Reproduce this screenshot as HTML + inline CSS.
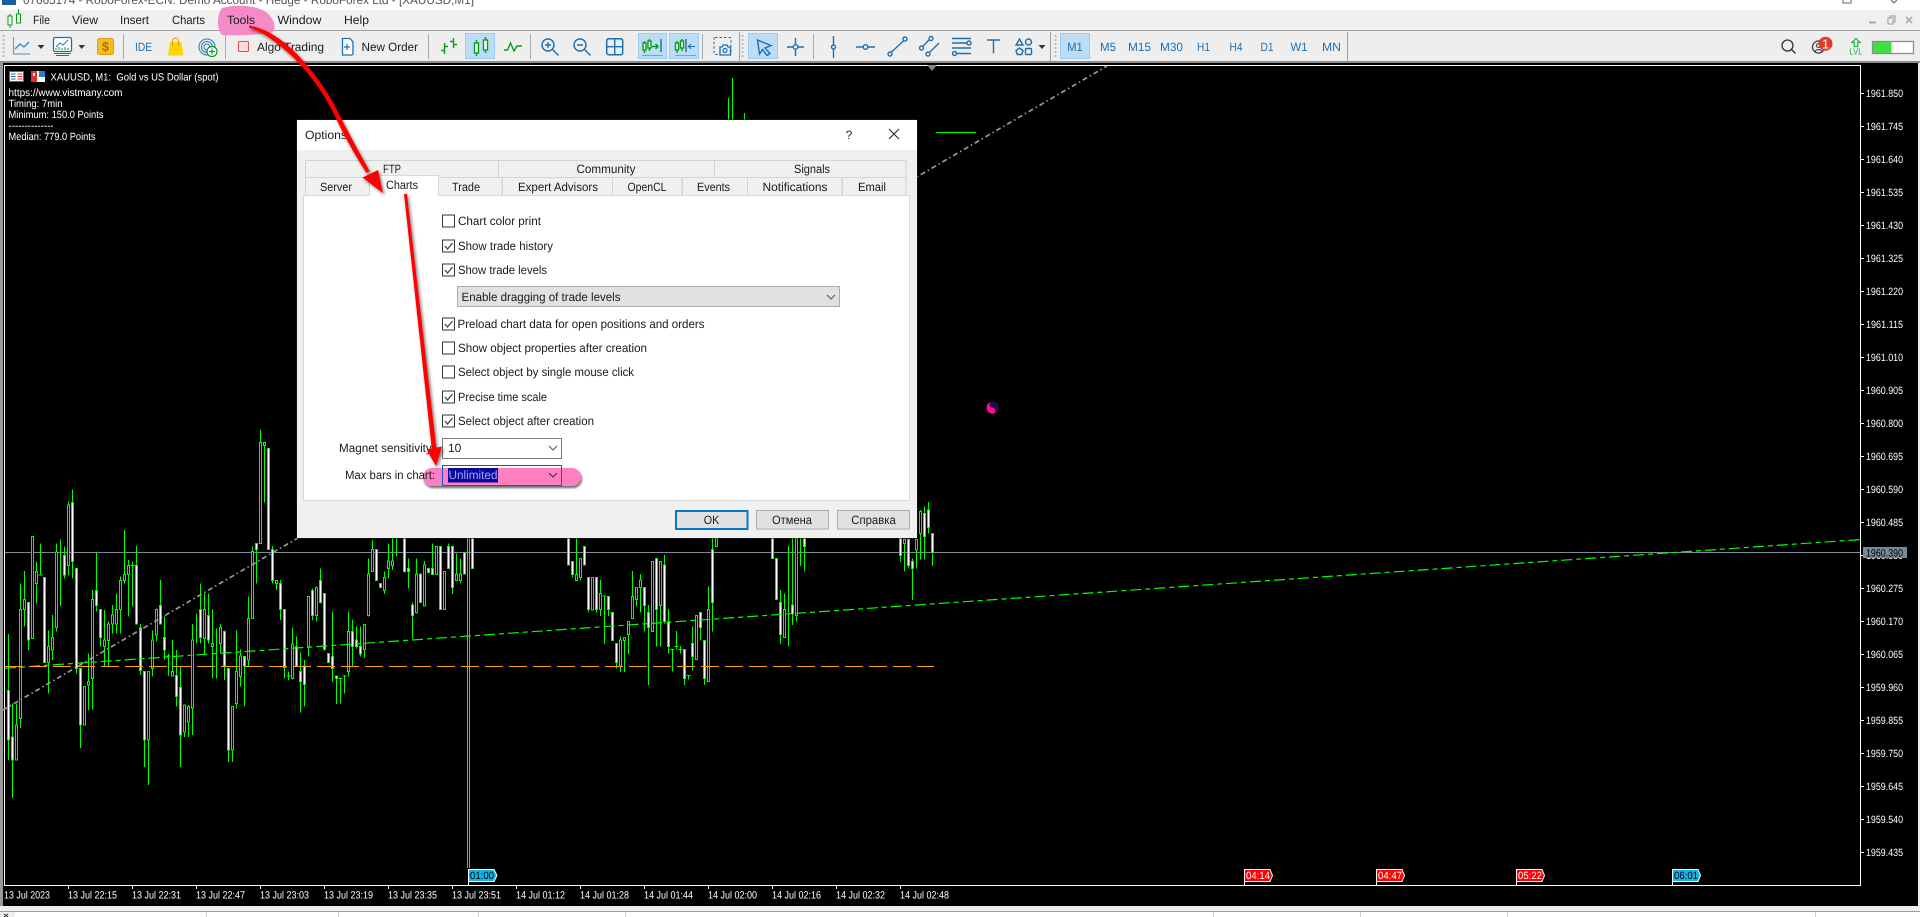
<!DOCTYPE html>
<html lang="en"><head><meta charset="utf-8"><title>MetaTrader chart options</title>
<style>
html,body{margin:0;padding:0;background:#000;width:1920px;height:917px;overflow:hidden}
svg{display:block;font-family:"Liberation Sans",sans-serif}
.u{font-size:12px;fill:#1a1a1a}
.b{font-size:12px;fill:#1f6fae}
.c{font-size:10.5px;fill:#fff}
.s{fill:none;stroke:#1f6fae;stroke-width:1.4}
.g{fill:none;stroke:#0a9a1e;stroke-width:1.4}
.sep{stroke:#a8a8a8;stroke-width:1}
</style></head><body>
<svg xmlns="http://www.w3.org/2000/svg" width="1920" height="917" viewBox="0 0 1920 917" text-rendering="geometricPrecision">
<defs>
<filter id="sh" x="-30%" y="-30%" width="160%" height="160%"><feDropShadow dx="1.5" dy="2" stdDeviation="1.5" flood-color="#000" flood-opacity=".55"/></filter>
<filter id="sp" x="-10%" y="-30%" width="120%" height="170%"><feDropShadow dx="1" dy="2" stdDeviation="1" flood-color="#000" flood-opacity=".6"/></filter>
</defs>

<!-- chrome backgrounds -->
<rect width="1920" height="917" fill="#000"/>
<rect width="1920" height="10" fill="#fff"/>
<rect y="10" width="1920" height="20" fill="#f0f0f0"/>
<rect y="30" width="1920" height="1" fill="#a0a0a0"/>
<rect y="31" width="1920" height="30" fill="#eeeeee"/>
<rect y="61" width="1920" height="2" fill="#8c8c8c"/>
<rect y="63" width="3" height="843" fill="#9a9a9a"/>
<rect x="1918" y="63" width="2" height="843" fill="#eee"/>

<!-- chart frame -->
<g shape-rendering="crispEdges">
<rect x="4" y="65" width="1857" height="1" fill="#fff"/>
<rect x="4" y="65" width="1" height="821" fill="#fff"/>
<rect x="1860" y="65" width="1" height="821" fill="#fff"/>
<rect x="4" y="885" width="1857" height="1" fill="#fff"/>
</g>
<polygon points="927,65 937,65 932,71" fill="#778899"/>

<!-- lines under candles -->
<line x1="5" y1="552.5" x2="1860" y2="552.5" stroke="#7f8c9c" stroke-width="1" shape-rendering="crispEdges"/>

<!-- candles, left block -->
<g transform="translate(.1667 420) scale(.33333)" stroke="#00ff00" stroke-width="3" shape-rendering="crispEdges">
<path fill="none" d="M25 642V1020M37 850V1134M49 850V1020M61 490V924M73 453V620M85 548V690M97 349V655M109 425V550M121 370V465M133 472V728M145 632V820M157 585V720M169 370V635M181 358V558M193 380V475M205 245V465M217 208V475M229 445V760M241 745V984M253 800V915M265 700V870M277 510V868M289 397V575M301 568V680M313 570V740M325 605V740M337 555V640M349 520V640M361 470V640M373 330V490M385 420V590M397 424V560M409 378V612M421 612V765M433 754V1041M445 754V1095M457 632V770M469 565V665M481 480V612M493 590V720M505 700V768M517 660V770M529 690V860M541 738V1041M553 855V951M565 855V951M577 612V945M589 580V670M601 490V670M613 520V700M625 520V670M637 568V775M649 625V775M661 612V700M673 632V780M685 745V1026M697 858V1026M709 632V865M721 688V800M733 710V860M745 530V738M757 380V596M769 370V490M781 28V372M793 68V248M805 85V388M817 378V490M829 480V510M841 480V600M853 568V775M865 755V780M877 622V778M889 650V738M901 698V878M913 720V860M925 530V710M937 505V600M949 500V605M961 445V550M973 520V692M985 700V727M997 575V785M1009 768V852M1021 775V850M1033 765V820M1045 575V770M1057 598V740M1069 620V685M1081 620V710M1093 613V712M1105 415V590M1117 360V455M1129 388V482M1141 490V502M1153 455V522M1165 370V475M1177 355V450M1189 354V408M1213 355V458M1225 415V505M1237 547V655M1249 415V580M1261 462V548M1273 423V560M1285 445V458M1297 370V465M1309 380V463M1321 380V568M1333 455V570M1345 370V445M1357 380V522M1369 400V482M1381 415V490M1393 398V462M1402 355V1344M1408 355V1344M1417 355V445M115 465H127M499 708H511M859 768H871M1015 775H1027M1027 768H1039M391 436H403"/>
<path fill="#000" d="M58 568h6V895h-6zM70 538h6V568h-6zM46 915h6V1020h-6zM94 349h6V655h-6zM106 455h6V490h-6zM142 680h6V728h-6zM154 652h6V690h-6zM166 396h6V622h-6zM202 255h6V437h-6zM250 800h6V915h-6zM262 785h6V795h-6zM274 538h6V775h-6zM310 660h6V680h-6zM322 612h6V662h-6zM334 585h6V612h-6zM346 568h6V612h-6zM358 481h6V568h-6zM370 463h6V482h-6zM382 436h6V464h-6zM442 754h6V960h-6zM454 660h6V745h-6zM466 568h6V645h-6zM514 755h6V768h-6zM550 855h6V936h-6zM562 860h6V906h-6zM574 660h6V864h-6zM610 568h6V655h-6zM634 670h6V680h-6zM658 622h6V670h-6zM694 860h6V990h-6zM706 755h6V850h-6zM718 708h6V770h-6zM742 595h6V720h-6zM754 395h6V595h-6zM778 68h6V370h-6zM790 68h6V76h-6zM826 482h6V490h-6zM874 672h6V775h-6zM922 530h6V683h-6zM946 502h6V587h-6zM1042 635h6V755h-6zM1090 613h6V688h-6zM1102 462h6V587h-6zM1114 388h6V455h-6zM1150 472h6V512h-6zM1162 423h6V445h-6zM1174 423h6V437h-6zM1246 462h6V578h-6zM1270 435h6V558h-6zM1306 380h6V463h-6zM1330 455h6V568h-6zM1366 462h6V482h-6zM1378 462h6V482h-6z"/>
<path fill="#fff" d="M22 812h6V960h-6zM34 951h6V1020h-6zM82 548h6V660h-6zM130 472h6V728h-6zM190 406h6V465h-6zM214 247h6V425h-6zM226 445h6V745h-6zM238 745h6V915h-6zM286 511h6V557h-6zM298 568h6V652h-6zM406 436h6V612h-6zM418 624h6V752h-6zM430 754h6V960h-6zM478 557h6V612h-6zM490 652h6V690h-6zM526 767h6V830h-6zM538 803h6V945h-6zM598 568h6V652h-6zM622 587h6V660h-6zM670 635h6V738h-6zM682 745h6V990h-6zM730 710h6V738h-6zM766 370h6V388h-6zM802 85h6V388h-6zM814 388h6V482h-6zM838 490h6V568h-6zM850 568h6V742h-6zM886 680h6V738h-6zM898 755h6V785h-6zM910 738h6V793h-6zM934 511h6V587h-6zM958 481h6V548h-6zM970 520h6V688h-6zM982 700h6V727h-6zM994 710h6V745h-6zM1006 768h6V775h-6zM1054 635h6V680h-6zM1066 660h6V680h-6zM1078 680h6V702h-6zM1126 388h6V482h-6zM1138 490h6V502h-6zM1210 355h6V455h-6zM1222 445h6V455h-6zM1234 555h6V587h-6zM1258 462h6V548h-6zM1282 445h6V458h-6zM1294 445h6V463h-6zM1318 380h6V568h-6zM1342 380h6V445h-6zM1354 380h6V502h-6zM1390 398h6V462h-6zM1414 355h6V445h-6z"/>
</g>

<!-- candles, right block -->
<g transform="translate(480.1667 520) scale(.33333)" stroke="#00ff00" stroke-width="3" shape-rendering="crispEdges">
<path fill="none" d="M265 55V135M277 125V173M289 55V183M301 115V182M313 80V135M325 172V278M337 172V270M349 172V278M361 180V288M373 228V372M385 230V288M397 278V362M409 370V446M421 350V456M433 352V456M445 305V402M457 153V296M469 202V258M481 162V278M493 202V335M505 255V495M517 124V334M529 115V380M541 124V380M553 105V310M565 267V400M577 388V455M589 333V388M601 378V400M613 388V495M625 465V478M637 320V452M649 287V418M661 277V362M673 362V495M685 200V484M697 55V335M709 55V80M877 55V115M889 115V238M901 210V372M913 220V352M925 78V380M937 55V315M949 55V305M961 55V138M973 55V155M1261 55V125M1273 58V155M1285 58V145M1297 115V240M1309 58V145M1321 -30V118M1333 -40V118M1345 -54V40M1357 40V138M367 228H379M571 388H583M583 380H595M595 388H607M619 466H631"/>
<path fill="#000" d="M286 163h6V182h-6zM298 115h6V172h-6zM334 172h6V270h-6zM358 220h6V268h-6zM418 360h6V438h-6zM430 352h6V362h-6zM442 305h6V344h-6zM454 230h6V296h-6zM466 202h6V238h-6zM478 180h6V203h-6zM514 124h6V334h-6zM538 124h6V256h-6zM646 287h6V418h-6zM682 268h6V484h-6zM706 55h6V80h-6zM910 268h6V352h-6zM946 55h6V287h-6zM1270 58h6V70h-6zM1306 58h6V90h-6zM1318 -25h6V40h-6z"/>
<path fill="#fff" d="M262 55h6V135h-6zM274 125h6V163h-6zM310 80h6V135h-6zM322 172h6V268h-6zM346 172h6V268h-6zM382 230h6V268h-6zM394 278h6V362h-6zM406 370h6V428h-6zM490 202h6V256h-6zM502 278h6V322h-6zM526 115h6V268h-6zM550 135h6V305h-6zM562 305h6V380h-6zM610 388h6V475h-6zM634 370h6V410h-6zM658 277h6V322h-6zM670 362h6V475h-6zM694 88h6V247h-6zM874 55h6V115h-6zM886 115h6V238h-6zM898 247h6V343h-6zM934 255h6V282h-6zM970 55h6V80h-6zM1258 55h6V106h-6zM1282 58h6V136h-6zM1294 124h6V146h-6zM1330 -20h6V50h-6zM1342 -30h6V22h-6zM1354 40h6V97h-6z"/>
</g>
<path d="M732.5 78V120M728.5 98V120M744.5 113V120" stroke="#00ff00" stroke-width="1" fill="none" shape-rendering="crispEdges"/>
<rect x="936" y="132" width="40" height="1" fill="#00ff00"/>

<!-- overlay lines -->
<line x1="3" y1="710" x2="1107" y2="66" stroke="#999" stroke-width="1.7" stroke-dasharray="5 3 1.5 3"/>
<line x1="5" y1="668.2" x2="1860" y2="539.6" stroke="#00ff00" stroke-width="1.2" stroke-dasharray="11 4 5 4"/>
<line x1="5" y1="666.5" x2="934" y2="666.5" stroke="#ffa500" stroke-width="1" stroke-dasharray="18 6" shape-rendering="crispEdges"/>
<circle cx="992.5" cy="407.7" r="6" fill="#ff0a8c"/>
<path d="M992.5 401.7a6 6 0 0 1 0 12a3 3 0 0 0 0-6a3 3 0 0 1 0-6z" fill="#1a0a50"/>

<!-- title bar -->
<rect x="2" y="0" width="14" height="5" fill="#1a5fa0"/>
<text x="23" y="4" font-size="12" fill="#555" textLength="451" lengthAdjust="spacingAndGlyphs">07665174 - RoboForex-ECN: Demo Account - Hedge - RoboForex Ltd - [XAUUSD,M1]</text>
<path d="M1843 0v3h8V0" fill="none" stroke="#666"/>
<path d="M1891 0l3 3 3-3" fill="none" stroke="#666"/>

<!-- Tools highlight -->
<path d="M222 8C235 4 255 5 266 12C276 20 277 32 270 33C255 35 232 36 222 35C216 28 217 15 222 8z" fill="#f48ac6"/>

<!-- menu -->
<g>
<path d="M10 16v14M18.500 11v14" stroke="#0a9a1e" stroke-width="1" fill="none" transform="translate(0 -2)"/>
<rect x="8" y="16" width="4" height="9" fill="#fff" stroke="#0a9a1e"/>
<rect x="16.500" y="14" width="4" height="9" fill="#fff" stroke="#0a9a1e"/>
<text class="u" x="33" y="24" textLength="17" lengthAdjust="spacingAndGlyphs">File</text>
<text class="u" x="72" y="24" textLength="26" lengthAdjust="spacingAndGlyphs">View</text>
<text class="u" x="120" y="24" textLength="29" lengthAdjust="spacingAndGlyphs">Insert</text>
<text class="u" x="172" y="24" textLength="33" lengthAdjust="spacingAndGlyphs">Charts</text>
<text class="u" x="227" y="24" textLength="28" lengthAdjust="spacingAndGlyphs">Tools</text>
<text class="u" x="277.500" y="24" textLength="44" lengthAdjust="spacingAndGlyphs">Window</text>
<text class="u" x="344" y="24" textLength="25" lengthAdjust="spacingAndGlyphs">Help</text>
<path d="M1869 22.500h7" stroke="#aaa" stroke-width="2"/>
<path d="M1888 18h5v6h-5zM1890 18v-2h5v6h-2" fill="none" stroke="#aaa" stroke-width="1.200"/>
<path d="M1906 17l6 6M1912 17l-6 6" stroke="#aaa" stroke-width="1.600"/>
</g>

<!-- toolbar separators -->
<g shape-rendering="crispEdges">
<path class="sep" d="M123.500 34V59M225.500 34V59M428.500 34V59M530.500 34V59M702.500 34V59M813.500 34V59"/>
<path d="M739.500 32V61M1050.500 32V61M1347.500 32V61" stroke="#a0a0a0" stroke-width="1"/>
<path d="M742.500 35V58M1055.500 35V58M3.500 35V58" stroke="#bbb" stroke-width="2" stroke-dasharray="2 2"/>
</g>

<!-- toolbar highlights -->
<g fill="#bddcf5" stroke="#9bcdf5" stroke-width="1" shape-rendering="crispEdges">
<rect x="465.500" y="33.500" width="29" height="25"/>
<rect x="638.500" y="33.500" width="28" height="25"/>
<rect x="669.500" y="33.500" width="29" height="25"/>
<rect x="748.500" y="33.500" width="29" height="25"/>
<rect x="1060.500" y="33.500" width="29" height="25"/>
</g>

<!-- toolbar icons -->
<path d="M13.500 37V54H30" fill="none" stroke="#7f9fc0" stroke-width="1.200"/>
<path d="M15 49l5-5 4 3 5-5" fill="none" stroke="#3d86c6" stroke-width="1.300"/>
<polygon points="37.500,45 44.500,45 41,49" fill="#333"/>
<rect x="53.500" y="37.500" width="18" height="14" rx="1.500" fill="#fff" stroke="#1f6fae" stroke-width="1.300"/>
<path d="M56 47l4-4 3 2 5-5" fill="none" stroke="#1f6fae"/>
<path d="M56 50v-2M59 50v-3M62 50v-2M65 50v-3M68 50v-2" stroke="#0a9a1e"/>
<path d="M54 53.500h17M56 55.500h13" stroke="#1f6fae"/>
<polygon points="78.500,45 85,45 81.700,49" fill="#333"/>
<rect x="97.500" y="38.500" width="16" height="16" rx="2" fill="#f6bb1e" stroke="#d79e12"/>
<text x="105.500" y="51" font-size="13" font-weight="bold" text-anchor="middle" fill="#a87400">$</text>
<text class="b" x="135" y="51" textLength="17" lengthAdjust="spacingAndGlyphs">IDE</text>
<polygon points="170,42 181.500,42 183.500,55.500 168,55.500" fill="#ffd400"/>
<path d="M172.500 46V41a3 3 0 0 1 6 0V46" fill="none" stroke="#e0a010" stroke-width="1"/>
<g fill="none" stroke="#2a78b8"><circle cx="207" cy="47" r="8"/><circle cx="207" cy="47" r="5.500"/><circle cx="207" cy="47" r="3"/></g>
<circle cx="212" cy="51.500" r="5" fill="#fff" stroke="#0a9a1e" stroke-width="1.200"/>
<path d="M209 51.500h6M212 48.500v6" stroke="#0a9a1e" stroke-width="1.200"/>
<rect x="238.500" y="41.500" width="10" height="10" rx="1" fill="#fbdcdc" stroke="#e05050"/>
<text class="u" x="257" y="51" textLength="67" lengthAdjust="spacingAndGlyphs">Algo Trading</text>
<path d="M342.500 38.500h7.500l3 3.500v11.500a1.500 1.500 0 0 1-1.500 1.500h-9z" fill="#fff" stroke="#1f6fae" stroke-width="1.300"/>
<path d="M344 47h6M347 44v6" stroke="#1f6fae" stroke-width="1.200"/>
<text class="u" x="361.500" y="51" textLength="56.500" lengthAdjust="spacingAndGlyphs">New Order</text>

<path d="M444.500 43V54M441 50.500h3.500M444.500 46.500H448M453.500 38V48M450 41.500h3.500M453.500 44.500H457" class="g"/>
<g class="g"><path d="M476.500 40V56M485.500 37V53"/><rect x="474.500" y="43" width="4" height="10" fill="#fff"/><rect x="483.500" y="40" width="4" height="10" fill="#fff"/></g>
<path d="M504 50h3.500l3-7 3.500 8 3-5h5" class="g"/>

<g class="s">
<circle cx="548" cy="45" r="6"/><path d="M552.500 49.500l6 6M545 45h6M548 42v6"/>
<circle cx="580" cy="45" r="6"/><path d="M584.500 49.500l6 6M577 45h6"/>
<rect x="606.700" y="38.700" width="16" height="16" rx="2" stroke-width="1.500" fill="#e6f0fa"/><path d="M614.700 39v15M607 46.700h15"/>
</g>

<g class="g"><path d="M644.500 41V53M649.500 39V51"/><rect x="643" y="43" width="3" height="7" fill="#fff"/><rect x="648" y="41" width="3" height="7" fill="#fff"/><path d="M652 46.500h6M655.500 44l2.500 2.500-2.500 2.500"/></g>
<path d="M661 39V52" stroke="#14507f" stroke-width="1.200"/><path d="M642 55.500h21" stroke="#999"/>
<g class="g"><path d="M677 41V53M682 39V51"/><rect x="675.500" y="43" width="3" height="7" fill="#fff"/><rect x="680.500" y="41" width="3" height="7" fill="#fff"/></g>
<path d="M686 39V52" stroke="#14507f" stroke-width="1.200"/><path d="M688 46.500h7M691 44l-2.500 2.500 2.500 2.500" stroke="#1f6fae" fill="none"/><path d="M675 55.500h21" stroke="#999"/>

<rect x="714" y="37.500" width="17" height="17" rx="1" fill="none" stroke="#1f6fae" stroke-dasharray="2.500 2"/>
<path d="M720 47h2l1-2h4l1 2h2.500v8H720z" fill="#eee" stroke="#1f6fae" stroke-width="1.300"/><circle cx="725" cy="50.500" r="2" fill="none" stroke="#1f6fae" stroke-width="1.200"/>

<path d="M757.500 40L771 45.500L765 48L770 53.500L767 55.500L762.500 49.500L759.500 54z" fill="none" stroke="#1f6fae" stroke-width="1.400"/>
<g class="s">
<path d="M787 47h6M798 47h6M795.500 38v7M795.500 49.500V56"/><circle cx="795.500" cy="47" r="2.300"/>
<path d="M833.500 36V45M833.500 49.500V58"/><circle cx="833.500" cy="47" r="2"/>
<path d="M856 47h7M868 47h7"/><circle cx="865.500" cy="47" r="2.300"/>
<path d="M891.500 52L904 40.500"/><circle cx="890" cy="54" r="2"/><circle cx="905" cy="39" r="2"/>
<path d="M923 46l6.500-6.500M930 52l9-9"/><circle cx="921.500" cy="48" r="2"/><circle cx="931" cy="38.500" r="2"/><circle cx="928" cy="54" r="2"/>
<path d="M952 38.500h19M952 43h14.500M952 48h19M957 53.500h14"/><circle cx="969" cy="43" r="2"/><circle cx="954.500" cy="53.500" r="2"/>
<path d="M987 40h13M993.500 40v13.500"/>
<path d="M1019.500 39l3.500 6h-7z"/><circle cx="1028.500" cy="42" r="3"/>
<path d="M1019.500 48l3.500 2.500-1.300 4h-4.400l-1.300-4z"/><rect x="1025.500" y="48.500" width="6" height="6" rx="1"/>
</g>
<polygon points="1038.500,45 1045.500,45 1042,49" fill="#333"/>

<!-- timeframes -->
<g text-anchor="middle">
<text class="b" x="1075" y="51" textLength="15.500" lengthAdjust="spacingAndGlyphs">M1</text>
<text class="b" x="1108" y="51" textLength="16" lengthAdjust="spacingAndGlyphs">M5</text>
<text class="b" x="1139.500" y="51" textLength="23" lengthAdjust="spacingAndGlyphs">M15</text>
<text class="b" x="1171.500" y="51" textLength="23" lengthAdjust="spacingAndGlyphs">M30</text>
<text class="b" x="1203.500" y="51" textLength="13" lengthAdjust="spacingAndGlyphs">H1</text>
<text class="b" x="1236" y="51" textLength="13" lengthAdjust="spacingAndGlyphs">H4</text>
<text class="b" x="1267" y="51" textLength="13" lengthAdjust="spacingAndGlyphs">D1</text>
<text class="b" x="1299" y="51" textLength="17" lengthAdjust="spacingAndGlyphs">W1</text>
<text class="b" x="1331.500" y="51" textLength="19" lengthAdjust="spacingAndGlyphs">MN</text>
</g>

<!-- right toolbar -->
<circle cx="1787.500" cy="45.500" r="5.500" fill="none" stroke="#333" stroke-width="1.300"/><path d="M1791.500 49.500l4 4" stroke="#333" stroke-width="1.300"/>
<circle cx="1818.500" cy="47" r="6" fill="none" stroke="#333" stroke-width="1.200"/><circle cx="1818.500" cy="45.500" r="2" fill="none" stroke="#333"/><path d="M1815 51.500c1-2.500 6-2.500 7 0" fill="none" stroke="#333"/>
<circle cx="1825.500" cy="43.700" r="7" fill="#e5392a"/>
<text x="1825.500" y="48.500" font-size="13" fill="#fff" text-anchor="middle">1</text>
<path d="M1856 38.500l4 4h-2.300v4h-3.400v-4H1852z" fill="none" stroke="#17b24a" stroke-width="1.200"/>
<text x="1856" y="54.500" font-size="9" fill="#17b24a" text-anchor="middle" textLength="13" lengthAdjust="spacingAndGlyphs">LVL</text>
<rect x="1872.500" y="41.500" width="41" height="12" fill="#fff" stroke="#8c8c8c" stroke-width="1.300"/>
<rect x="1873" y="42" width="18.500" height="11" fill="#44dd44"/>

<!-- chart labels -->
<rect x="9.500" y="71.500" width="14" height="10" fill="#fff" stroke="#e03030"/>
<path d="M11 74h4.500M11 76.500h4.500M11 79h4.500" stroke="#2a5fb0"/><path d="M17.500 74h5M17.500 76.500h5M17.500 79h5" stroke="#e03030"/>
<rect x="31" y="71" width="14" height="11" fill="#fff"/><rect x="31" y="71" width="6" height="11" fill="#e03030"/><rect x="39" y="71" width="6" height="6" fill="#2a7fc8"/><rect x="33" y="73" width="2" height="3" fill="#fff"/>
<text class="c" x="50.500" y="80.500" textLength="168" lengthAdjust="spacingAndGlyphs" xml:space="preserve">XAUUSD, M1:  Gold vs US Dollar (spot)</text>
<text class="c" x="8.500" y="96" textLength="114" lengthAdjust="spacingAndGlyphs">https://www.vistmany.com</text>
<text class="c" x="8.500" y="107" textLength="54" lengthAdjust="spacingAndGlyphs">Timing: 7min</text>
<text class="c" x="8.500" y="118" textLength="95" lengthAdjust="spacingAndGlyphs">Minimum: 150.0 Points</text>
<text class="c" x="8.500" y="129" textLength="45" lengthAdjust="spacingAndGlyphs">--------------</text>
<text class="c" x="8.500" y="140" textLength="87" lengthAdjust="spacingAndGlyphs">Median: 779.0 Points</text>

<!-- price axis -->
<path d="M1861 93.500h3M1861 126.500h3M1861 159.500h3M1861 192.500h3M1861 225.500h3M1861 258.500h3M1861 291.500h3M1861 324.500h3M1861 357.500h3M1861 390.500h3M1861 423.500h3M1861 456.500h3M1861 489.500h3M1861 522.500h3M1861 555.500h3M1861 588.500h3M1861 621.500h3M1861 654.500h3M1861 687.500h3M1861 720.500h3M1861 753.500h3M1861 786.500h3M1861 819.500h3M1861 852.500h3" stroke="#fff" shape-rendering="crispEdges"/>
<g>
<text class="c" x="1866" y="97" textLength="37" lengthAdjust="spacingAndGlyphs">1961.850</text>
<text class="c" x="1866" y="130" textLength="37" lengthAdjust="spacingAndGlyphs">1961.745</text>
<text class="c" x="1866" y="163" textLength="37" lengthAdjust="spacingAndGlyphs">1961.640</text>
<text class="c" x="1866" y="196" textLength="37" lengthAdjust="spacingAndGlyphs">1961.535</text>
<text class="c" x="1866" y="229" textLength="37" lengthAdjust="spacingAndGlyphs">1961.430</text>
<text class="c" x="1866" y="262" textLength="37" lengthAdjust="spacingAndGlyphs">1961.325</text>
<text class="c" x="1866" y="295" textLength="37" lengthAdjust="spacingAndGlyphs">1961.220</text>
<text class="c" x="1866" y="328" textLength="37" lengthAdjust="spacingAndGlyphs">1961.115</text>
<text class="c" x="1866" y="361" textLength="37" lengthAdjust="spacingAndGlyphs">1961.010</text>
<text class="c" x="1866" y="394" textLength="37" lengthAdjust="spacingAndGlyphs">1960.905</text>
<text class="c" x="1866" y="427" textLength="37" lengthAdjust="spacingAndGlyphs">1960.800</text>
<text class="c" x="1866" y="460" textLength="37" lengthAdjust="spacingAndGlyphs">1960.695</text>
<text class="c" x="1866" y="493" textLength="37" lengthAdjust="spacingAndGlyphs">1960.590</text>
<text class="c" x="1866" y="526" textLength="37" lengthAdjust="spacingAndGlyphs">1960.485</text>
<text class="c" x="1866" y="559" textLength="37" lengthAdjust="spacingAndGlyphs">1960.380</text>
<text class="c" x="1866" y="592" textLength="37" lengthAdjust="spacingAndGlyphs">1960.275</text>
<text class="c" x="1866" y="625" textLength="37" lengthAdjust="spacingAndGlyphs">1960.170</text>
<text class="c" x="1866" y="658" textLength="37" lengthAdjust="spacingAndGlyphs">1960.065</text>
<text class="c" x="1866" y="691" textLength="37" lengthAdjust="spacingAndGlyphs">1959.960</text>
<text class="c" x="1866" y="724" textLength="37" lengthAdjust="spacingAndGlyphs">1959.855</text>
<text class="c" x="1866" y="757" textLength="37" lengthAdjust="spacingAndGlyphs">1959.750</text>
<text class="c" x="1866" y="790" textLength="37" lengthAdjust="spacingAndGlyphs">1959.645</text>
<text class="c" x="1866" y="823" textLength="37" lengthAdjust="spacingAndGlyphs">1959.540</text>
<text class="c" x="1866" y="856" textLength="37" lengthAdjust="spacingAndGlyphs">1959.435</text>
</g>
<rect x="1863" y="547" width="44" height="11" fill="#778899"/>
<text x="1866" y="556.500" font-size="10.500" fill="#000" textLength="37" lengthAdjust="spacingAndGlyphs">1960.390</text>

<!-- time axis -->
<path d="M68.500 886v3M132.500 886v3M196.500 886v3M260.500 886v3M324.500 886v3M388.500 886v3M452.500 886v3M516.500 886v3M580.500 886v3M644.500 886v3M708.500 886v3M772.500 886v3M836.500 886v3M900.500 886v3M468.500 881v4M1244.500 881v4M1376.500 881v4M1516.500 881v4M1672.500 881v4" stroke="#fff" shape-rendering="crispEdges"/>
<g>
<text class="c" x="4" y="898.500" textLength="46" lengthAdjust="spacingAndGlyphs">13 Jul 2023</text>
<text class="c" x="68" y="898.500" textLength="49" lengthAdjust="spacingAndGlyphs">13 Jul 22:15</text>
<text class="c" x="132" y="898.500" textLength="49" lengthAdjust="spacingAndGlyphs">13 Jul 22:31</text>
<text class="c" x="196" y="898.500" textLength="49" lengthAdjust="spacingAndGlyphs">13 Jul 22:47</text>
<text class="c" x="260" y="898.500" textLength="49" lengthAdjust="spacingAndGlyphs">13 Jul 23:03</text>
<text class="c" x="324" y="898.500" textLength="49" lengthAdjust="spacingAndGlyphs">13 Jul 23:19</text>
<text class="c" x="388" y="898.500" textLength="49" lengthAdjust="spacingAndGlyphs">13 Jul 23:35</text>
<text class="c" x="452" y="898.500" textLength="49" lengthAdjust="spacingAndGlyphs">13 Jul 23:51</text>
<text class="c" x="516" y="898.500" textLength="49" lengthAdjust="spacingAndGlyphs">14 Jul 01:12</text>
<text class="c" x="580" y="898.500" textLength="49" lengthAdjust="spacingAndGlyphs">14 Jul 01:28</text>
<text class="c" x="644" y="898.500" textLength="49" lengthAdjust="spacingAndGlyphs">14 Jul 01:44</text>
<text class="c" x="708" y="898.500" textLength="49" lengthAdjust="spacingAndGlyphs">14 Jul 02:00</text>
<text class="c" x="772" y="898.500" textLength="49" lengthAdjust="spacingAndGlyphs">14 Jul 02:16</text>
<text class="c" x="836" y="898.500" textLength="49" lengthAdjust="spacingAndGlyphs">14 Jul 02:32</text>
<text class="c" x="900" y="898.500" textLength="49" lengthAdjust="spacingAndGlyphs">14 Jul 02:48</text>
</g>

<!-- time tags -->
<polygon points="468.500,869.500 494,869.500 497,875.500 494,881.500 468.500,881.500" fill="#12b5ea" stroke="#fff"/>
<text x="470" y="879" font-size="10.500" fill="#000" textLength="24" lengthAdjust="spacingAndGlyphs">01:00</text>
<polygon points="1244.500,869.500 1270,869.500 1272.500,875.500 1270,881.500 1244.500,881.500" fill="#f00" stroke="#fff"/>
<text x="1246" y="879" font-size="10.500" fill="#fff" textLength="24" lengthAdjust="spacingAndGlyphs">04:14</text>
<polygon points="1376.500,869.500 1402,869.500 1404.500,875.500 1402,881.500 1376.500,881.500" fill="#f00" stroke="#fff"/>
<text x="1378" y="879" font-size="10.500" fill="#fff" textLength="24" lengthAdjust="spacingAndGlyphs">04:47</text>
<polygon points="1516.500,869.500 1542,869.500 1544.500,875.500 1542,881.500 1516.500,881.500" fill="#f00" stroke="#fff"/>
<text x="1518" y="879" font-size="10.500" fill="#fff" textLength="24" lengthAdjust="spacingAndGlyphs">05:22</text>
<polygon points="1672.500,869.500 1698,869.500 1700.500,875.500 1698,881.500 1672.500,881.500" fill="#12b5ea" stroke="#fff"/>
<text x="1674" y="879" font-size="10.500" fill="#000" textLength="24" lengthAdjust="spacingAndGlyphs">06:01</text>

<!-- bottom strip -->
<rect y="906" width="1920" height="11" fill="#efefef"/>
<rect y="911" width="1920" height="1" fill="#a0a0a0"/>
<rect x="15" y="912" width="1905" height="5" fill="#fff"/>
<path d="M206.500 912v5M338.500 912v5M478.500 912v5M625.500 912v5M1213.500 912v5M1360.500 912v5M1507.500 912v5M1815.500 912v5" stroke="#d0d0d0" shape-rendering="crispEdges"/>
<path d="M4 914l4 3M8 914l-4 3" stroke="#333"/>

<!-- dialog -->
<g>
<rect x="296.500" y="119.500" width="621" height="419" fill="#222"/>
<rect x="297" y="120" width="620" height="418" fill="#f0f0f0"/>
<rect x="297" y="120" width="620" height="30" fill="#fff"/>
<text class="u" x="305" y="139" textLength="42" lengthAdjust="spacingAndGlyphs">Options</text>
<text class="u" x="849" y="139" text-anchor="middle">?</text>
<path d="M889 129l10 10M899 129l-10 10" stroke="#222" stroke-width="1"/>

<!-- tabs -->
<g fill="#f0f0f0" stroke="#d4d4d4" shape-rendering="crispEdges">
<rect x="305.500" y="160.500" width="193" height="17"/>
<rect x="498.500" y="160.500" width="216" height="17"/>
<rect x="714.500" y="160.500" width="191.500" height="17"/>
<rect x="305.500" y="177.500" width="64" height="18"/>
<rect x="438.500" y="177.500" width="63.500" height="18"/>
<rect x="502.500" y="177.500" width="110" height="18"/>
<rect x="612.500" y="177.500" width="69.500" height="18"/>
<rect x="682.500" y="177.500" width="65" height="18"/>
<rect x="747.500" y="177.500" width="94.500" height="18"/>
<rect x="842.500" y="177.500" width="63.500" height="18"/>
</g>
<rect x="303.500" y="195.500" width="606" height="305" fill="#fff" stroke="#d9d9d9" shape-rendering="crispEdges"/>
<path d="M369.500 196V175.500H438.500V196" fill="#fff" stroke="#d9d9d9" shape-rendering="crispEdges"/>
<rect x="370" y="190" width="68" height="7" fill="#fff"/>
<g text-anchor="middle">
<text class="u" x="392" y="173" textLength="18" lengthAdjust="spacingAndGlyphs">FTP</text>
<text class="u" x="606" y="173" textLength="59" lengthAdjust="spacingAndGlyphs">Community</text>
<text class="u" x="812" y="173" textLength="36" lengthAdjust="spacingAndGlyphs">Signals</text>
<text class="u" x="336" y="191" textLength="32" lengthAdjust="spacingAndGlyphs">Server</text>
<text class="u" x="402" y="189" textLength="32" lengthAdjust="spacingAndGlyphs">Charts</text>
<text class="u" x="466" y="191" textLength="28" lengthAdjust="spacingAndGlyphs">Trade</text>
<text class="u" x="558" y="191" textLength="80" lengthAdjust="spacingAndGlyphs">Expert Advisors</text>
<text class="u" x="647" y="191" textLength="39" lengthAdjust="spacingAndGlyphs">OpenCL</text>
<text class="u" x="713.500" y="191" textLength="33" lengthAdjust="spacingAndGlyphs">Events</text>
<text class="u" x="795" y="191" textLength="65" lengthAdjust="spacingAndGlyphs">Notifications</text>
<text class="u" x="872" y="191" textLength="28" lengthAdjust="spacingAndGlyphs">Email</text>
</g>

<!-- checkboxes -->
<g fill="#fff" stroke="#333" shape-rendering="crispEdges">
<rect x="442.500" y="215" width="12" height="12"/>
<rect x="442.500" y="240" width="12" height="12"/>
<rect x="442.500" y="264" width="12" height="12"/>
<rect x="442.500" y="318" width="12" height="12"/>
<rect x="442.500" y="342" width="12" height="12"/>
<rect x="442.500" y="366" width="12" height="12"/>
<rect x="442.500" y="391" width="12" height="12"/>
<rect x="442.500" y="415" width="12" height="12"/>
</g>
<g fill="none" stroke="#444" stroke-width="1.300">
<path d="M445 246l2.500 3 5-6"/>
<path d="M445 270l2.500 3 5-6"/>
<path d="M445 324l2.500 3 5-6"/>
<path d="M445 397l2.500 3 5-6"/>
<path d="M445 421l2.500 3 5-6"/>
</g>
<text class="u" x="458" y="225" textLength="83" lengthAdjust="spacingAndGlyphs">Chart color print</text>
<text class="u" x="458" y="250" textLength="95" lengthAdjust="spacingAndGlyphs">Show trade history</text>
<text class="u" x="458" y="274" textLength="89" lengthAdjust="spacingAndGlyphs">Show trade levels</text>
<rect x="457.500" y="286.500" width="382" height="20" fill="#e1e1e1" stroke="#adadad" shape-rendering="crispEdges"/>
<text class="u" x="461.500" y="301" textLength="159" lengthAdjust="spacingAndGlyphs">Enable dragging of trade levels</text>
<path d="M827 295l4 4 4-4" fill="none" stroke="#555"/>
<text class="u" x="457.500" y="328" textLength="247" lengthAdjust="spacingAndGlyphs">Preload chart data for open positions and orders</text>
<text class="u" x="458" y="352" textLength="189" lengthAdjust="spacingAndGlyphs">Show object properties after creation</text>
<text class="u" x="458" y="376" textLength="176" lengthAdjust="spacingAndGlyphs">Select object by single mouse click</text>
<text class="u" x="458" y="401" textLength="89" lengthAdjust="spacingAndGlyphs">Precise time scale</text>
<text class="u" x="458" y="425" textLength="136" lengthAdjust="spacingAndGlyphs">Select object after creation</text>

<!-- magnet -->
<text class="u" x="339" y="452" textLength="96" lengthAdjust="spacingAndGlyphs">Magnet sensitivity:</text>
<rect x="442.500" y="438.500" width="119" height="20" fill="#fff" stroke="#7a7a7a" shape-rendering="crispEdges"/>
<text class="u" x="448" y="452">10</text>
<path d="M549 446l4 4 4-4" fill="none" stroke="#555"/>

<!-- max bars -->
<rect x="442.500" y="465.500" width="119" height="20" fill="#fff"/>
<rect x="423" y="468" width="158" height="18" rx="9" fill="#ff80c0" filter="url(#sp)"/>
<rect x="442.500" y="465.500" width="119" height="20" fill="none" stroke="#0a5fd0" shape-rendering="crispEdges"/>
<text class="u" x="345" y="479" textLength="90" lengthAdjust="spacingAndGlyphs">Max bars in chart:</text>
<rect x="448" y="468" width="50" height="14.500" fill="#0a0a9c"/>
<text x="448.500" y="479" font-size="12" fill="#a7a0ff" textLength="49" lengthAdjust="spacingAndGlyphs">Unlimited</text>
<path d="M549 473l4 4 4-4" fill="none" stroke="#333"/>

<!-- buttons -->
<rect x="676" y="511" width="71.500" height="18" fill="#e1e1e1" stroke="#0078d7" stroke-width="2" shape-rendering="crispEdges"/>
<rect x="756.500" y="510.500" width="72" height="18.500" fill="#e1e1e1" stroke="#adadad" shape-rendering="crispEdges"/>
<rect x="837.500" y="510.500" width="72" height="18.500" fill="#e1e1e1" stroke="#adadad" shape-rendering="crispEdges"/>
<text class="u" x="711.500" y="524" text-anchor="middle" textLength="15.500" lengthAdjust="spacingAndGlyphs">OK</text>
<text class="u" x="792" y="524" text-anchor="middle" textLength="40" lengthAdjust="spacingAndGlyphs">Отмена</text>
<text class="u" x="873.500" y="524" text-anchor="middle" textLength="44.500" lengthAdjust="spacingAndGlyphs">Справка</text>
</g>

<!-- red arrows -->
<g filter="url(#sh)" fill="#f00">
<path d="M249 25.500C268 29 283 40 297 54C314 72 328 92 338 112C349 134 359 152 369.500 171L366.500 173C354.500 154 344.500 137 334.500 115C324 94 311 75 294 58C281 46 266 33 249 27.500z"/>
<polygon points="383,193 362.500,177.500 378,170"/>
<path d="M404 194L407 194L436.500 450L432 451z"/>
<polygon points="436,466 426.500,449.500 442,446.500"/>
</g>
</svg>
</body></html>
